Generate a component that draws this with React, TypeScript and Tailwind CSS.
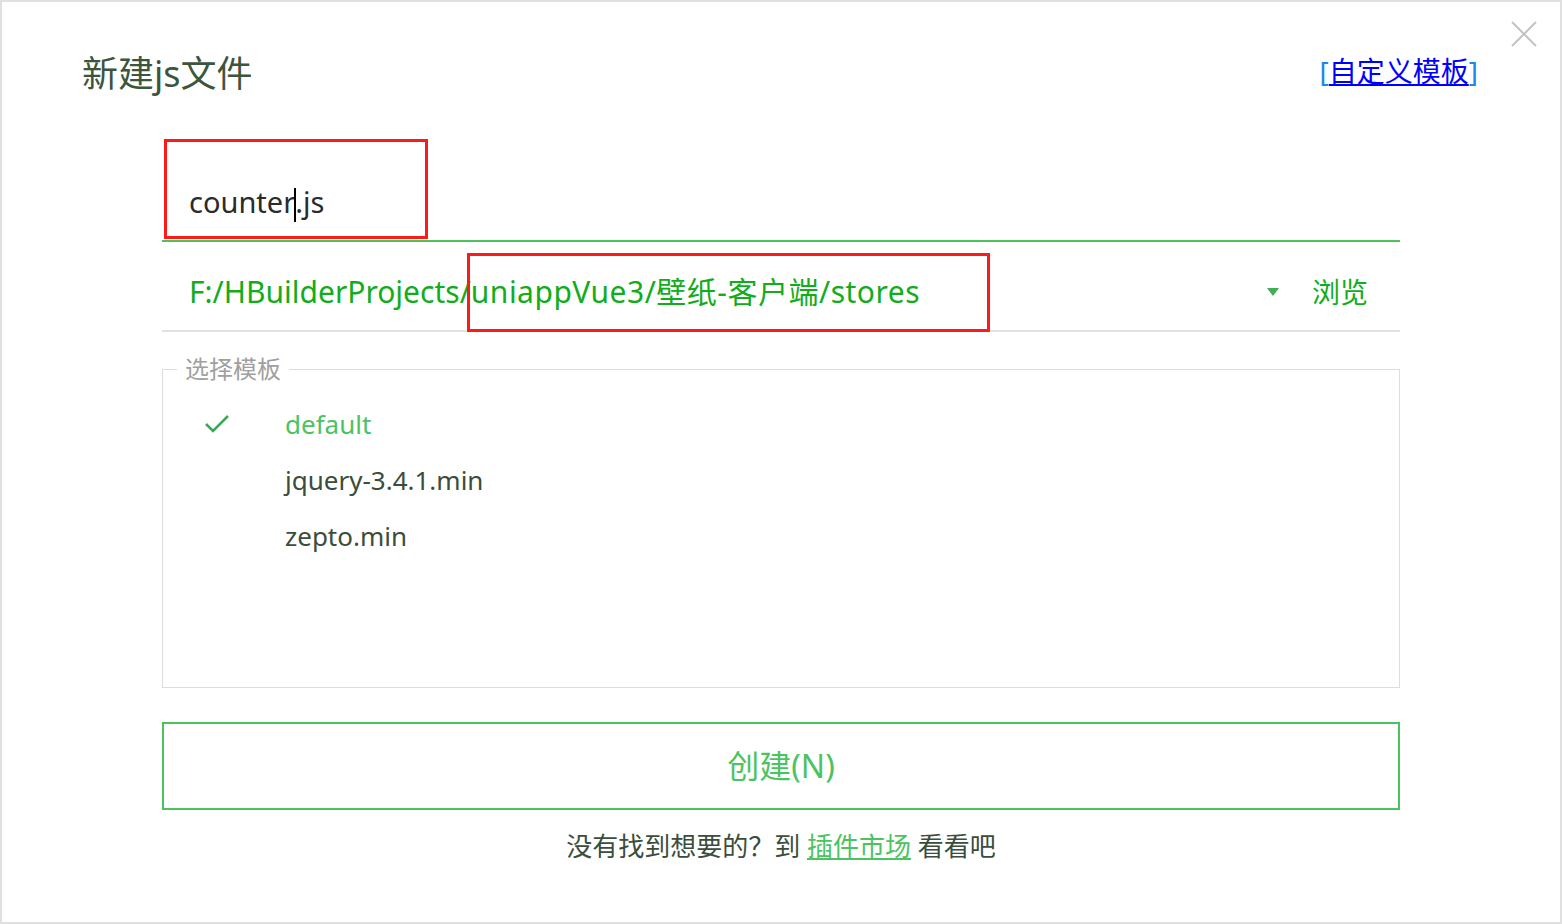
import React from "react";

const font = { fontFamily: '"Noto Sans", "Noto Sans CJK SC", sans-serif' };

const templates = ["default", "jquery-3.4.1.min", "zepto.min"];

const App: React.FC = () => {
  return (
    <div
      className="relative w-full h-[924px] bg-white border-2 border-[#e0e0e0] text-[#3b4d3b]"
      style={font}
    >
      {/* close */}
      <button className="absolute right-[21px] top-[17px] w-[30px] h-[30px]">
        <svg viewBox="0 0 30 30" className="w-[30px] h-[30px]">
          <path d="M3 3L27 27M27 3L3 27" stroke="#c4c4c4" strokeWidth="2" fill="none" />
        </svg>
      </button>

      {/* header */}
      <div className="flex items-center justify-between pl-[80px] pr-[82px] pt-[46px]">
        <h1 className="text-[36px] leading-[52px] text-[#3d553d]">新建js文件</h1>
        <a className="text-[28px] leading-[40px] text-[#0000ff] underline -mt-[6px]">
          <span className="text-[#1e88e5]">[</span>自定义模板<span className="text-[#1e88e5]">]</span>
        </a>
      </div>

      <div className="ml-[160px] w-[1238px]">
        {/* name input */}
        <div className="relative mt-[40px] h-[102px] border-b-2 border-[#4cc35f] flex items-end pb-[18px] pl-[27px]">
          <span className="text-[29px] leading-[40px] text-[#2b2b2b]">
            counter<span className="inline-block w-[2px] h-[34px] bg-black align-middle -mx-[1px]"></span>.js
          </span>
          <div className="absolute left-[2px] top-[-1px] w-[264px] h-[100px] border-[3px] border-[#ff1a1a]"></div>
        </div>

        {/* path row */}
        <div className="relative h-[90px] border-b-2 border-[#e2e2e2] flex items-center pt-[12px] pl-[27px] pr-[32px]">
          <span className="flex-1 text-[30px] leading-[40px] text-[#12ac1c]">
            F:/HBuilderProjects/<span className="tracking-[0.5px]">uniappVue3/壁纸-客户端/stores</span>
          </span>
          <svg viewBox="0 0 12 8" className="w-[12px] h-[8px] mr-[33px]">
            <path d="M0 0H12L6 8Z" fill="#3fae55" />
          </svg>
          <span className="text-[28px] leading-[40px] text-[#12ac1c]">浏览</span>
          <div className="absolute left-[305px] top-[11px] w-[523px] h-[79px] border-[3px] border-[#ff1a1a]"></div>
        </div>

        {/* template fieldset */}
        <fieldset className="mt-[22px] h-[334px] border border-[#dddddd] pl-[14px] pr-[20px] m-0">
          <legend className="px-[8px] text-[24px] leading-[30px] text-[#a0a0a0]">选择模板</legend>
          <ul className="pt-[12px] pl-[8px]">
            {templates.map((t, i) => (
              <li key={t} className="flex items-center h-[56px]">
                <span className="w-[100px] pl-[20px] flex">
                  {i === 0 && (
                    <svg viewBox="0 0 24 20" className="w-[24px] h-[20px]">
                      <path d="M1 10L8 17L23 2" stroke="#3aa85a" strokeWidth="2.5" fill="none" />
                    </svg>
                  )}
                </span>
                <span
                  className={
                    i === 0
                      ? "text-[26px] leading-[36px] text-[#4cc35f]"
                      : "text-[26px] leading-[36px] text-[#3b4d3b]"
                  }
                >
                  {t}
                </span>
              </li>
            ))}
          </ul>
        </fieldset>

        {/* create button */}
        <button className="mt-[34px] w-full h-[88px] border-2 border-[#4cc35f] text-[32px] text-[#4cc35f]">
          创建(N)
        </button>

        {/* footer */}
        <p className="mt-[16px] text-center text-[26px] leading-[40px] text-[#3b4d3b]">
          没有找到想要的？到 <a className="text-[#4cc35f] underline">插件市场</a> 看看吧
        </p>
      </div>
    </div>
  );
};

export default App;
